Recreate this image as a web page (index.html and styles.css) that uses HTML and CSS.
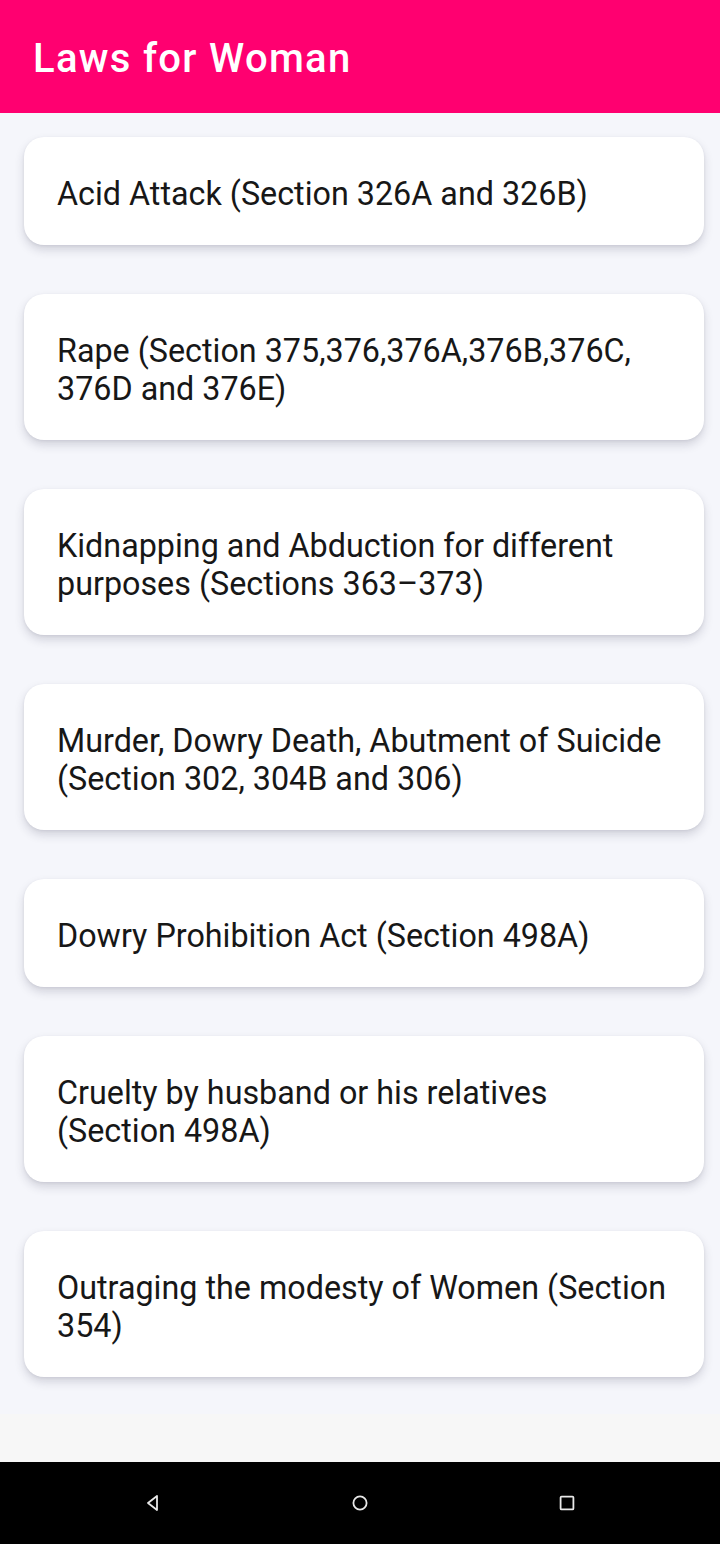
FILE: index.html
```html
<!DOCTYPE html>
<html>
<head>
<meta charset="utf-8">
<link rel="stylesheet" href="styles.css">
</head>
<body>
<div class="screen">
  <header class="appbar"><h1 class="title">Laws for Woman</h1></header>
  <main class="list">
    <div class="card">Acid Attack (Section 326A and 326B)</div>
    <div class="card">Rape (Section 375,376,376A,376B,376C,<br>376D and 376E)</div>
    <div class="card">Kidnapping and Abduction for different<br>purposes (Sections 363–373)</div>
    <div class="card">Murder, Dowry Death, Abutment of Suicide<br>(Section 302, 304B and 306)</div>
    <div class="card">Dowry Prohibition Act (Section 498A)</div>
    <div class="card">Cruelty by husband or his relatives<br>(Section 498A)</div>
    <div class="card">Outraging the modesty of Women (Section<br>354)</div>
  </main>
  <div class="filler"></div>
  <nav class="navbar">
    <svg class="nav-icon" width="20" height="20" viewBox="0 0 20 20"><path d="M14 3 L5 10 L14 17 Z" fill="none" stroke="#e8e8e8" stroke-width="1.8" stroke-linejoin="round"/></svg>
    <svg class="nav-icon" width="20" height="20" viewBox="0 0 20 20"><circle cx="10" cy="10" r="6.6" fill="none" stroke="#e8e8e8" stroke-width="1.8"/></svg>
    <svg class="nav-icon" width="20" height="20" viewBox="0 0 20 20"><rect x="3.6" y="3.6" width="12.8" height="12.8" rx="1" fill="none" stroke="#e8e8e8" stroke-width="1.8"/></svg>
  </nav>
</div>
</body>
</html>
```
FILE: styles.css
```css
* { box-sizing: border-box; }
html, body { margin: 0; padding: 0; }
body { font-family: Roboto, "Noto Sans", sans-serif; background: #f7f7f7; }
.screen { width: 720px; height: 1544px; display: flex; flex-direction: column; overflow: hidden; }
.appbar { height: 113px; background: #ff0070; display: flex; align-items: center; padding-left: 33px; flex-shrink: 0; }
.title { margin: 0; color: #ffffff; font-size: 40px; font-weight: 500; letter-spacing: 1.3px; padding-top: 4px; }
.list { background: #f5f6fb; padding: 24px 16px 37px 24px; display: flex; flex-direction: column; gap: 49px; }
.card { background: #ffffff; border-radius: 20px; padding: 38px 33px 32px; font-size: 32.3px; line-height: 38px; color: #171717; white-space: nowrap; box-shadow: 0 5px 10px rgba(40, 40, 70, 0.17), 0 1px 3px rgba(40, 40, 70, 0.08); }
.filler { flex: 1; background: #f7f7f7; }
.navbar { height: 82px; background: #000000; display: flex; align-items: center; justify-content: space-between; padding: 0 143px; flex-shrink: 0; }
.nav-icon { display: block; }
```
